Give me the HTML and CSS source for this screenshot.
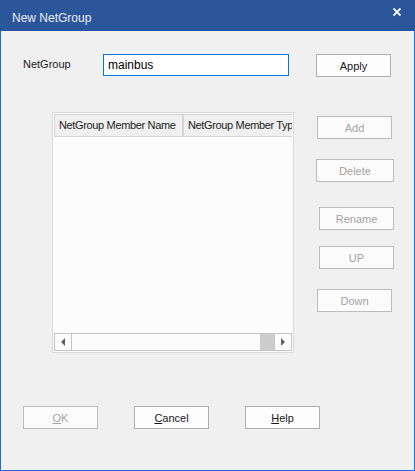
FILE: index.html
```html
<html>
    <head>
        <title>New NetGroup</title>
        <link rel="stylesheet" href="styles.css">
    </head>
    <body>
        <div class="window">
            <div class="titlebar">
                <span class="title">New NetGroup</span>
                <svg class="close" width="8" height="8" viewBox="0 0 8 8">
                    <path d="M0.5 0.5 L7.5 7.5 M7.5 0.5 L0.5 7.5" stroke="#ffffff" stroke-width="1.8" />
                </svg>
            </div>
            <div class="content">
                <div class="top-row">
                    <div class="label">NetGroup</div>
                    <input type="text" class="name-input" value="mainbus" />
                    <button class="btn apply">Apply</button>
                </div>
                <div class="middle">
                    <div class="grid">
                        <div class="grid-head">
                            <div class="col col-name">NetGroup Member Name</div>
                            <div class="col col-type">NetGroup Member Type</div>
                        </div>
                        <div class="grid-body"></div>
                        <div class="hscroll">
                            <div class="arrow left"><span class="tri tri-left"></span></div>
                            <div class="track"></div>
                            <div class="thumb"></div>
                            <div class="arrow right"><span class="tri tri-right"></span></div>
                        </div>
                    </div>
                    <div class="side">
                        <button class="btn off b-add" disabled>Add</button>
                        <button class="btn off b-delete" disabled>Delete</button>
                        <button class="btn off b-rename" disabled>Rename</button>
                        <button class="btn off b-up" disabled>UP</button>
                        <button class="btn off b-down" disabled>Down</button>
                    </div>
                </div>
                <div class="bottom-row">
                    <button class="btn off" disabled><u>O</u>K</button>
                    <button class="btn"><u>C</u>ancel</button>
                    <button class="btn"><u>H</u>elp</button>
                </div>
            </div>
        </div>
    </body>
</html>
```

FILE: styles.css
```css
body{
    margin: 0;
    font-family: "Segoe UI", "Liberation Sans", Arial, sans-serif;
    font-size: 11px;
    color: #1a1a1a;
}
.window{
    width: 415px;
    height: 471px;
    box-sizing: border-box;
    border: 1px solid #1a6fd6;
    border-top: none;
    background: #f0f0f0;
    display: flex;
    flex-direction: column;
}
.titlebar{
    height: 31px;
    margin: 0 -1px;
    background: #2b579a;
    color: #ecedf3;
    display: flex;
    align-items: center;
    justify-content: space-between;
    padding: 0 14px 0 12px;
    flex: none;
}
.title{
    font-size: 12px;
    margin-top: 4px;
}
.close{
    margin-top: -8px;
}
.content{
    padding: 23px 0 0 22px;
}
.top-row{
    display: flex;
    align-items: flex-start;
    height: 23px;
}
.label{
    width: 80px;
    line-height: 21px;
}
.name-input{
    width: 186px;
    height: 22px;
    box-sizing: border-box;
    border: 1px solid #0078d7;
    background: #ffffff;
    padding: 0 0 1px 4px;
    margin: 0 27px 0 0;
    font-family: inherit;
    font-size: 12px;
    color: #000000;
    outline: none;
}
.btn{
    width: 75px;
    height: 23px;
    box-sizing: border-box;
    border: 1px solid #adadad;
    background: #fdfdfd;
    font-family: inherit;
    font-size: 11px;
    color: #1a1a1a;
    padding: 0;
    margin: 0;
}
.btn.off{
    color: #a3a3a3;
    border-color: #bcbcbc;
    background: #fbfbfb;
}
.middle{
    display: flex;
    align-items: flex-start;
    margin-top: 35px;
    margin-left: 29px;
}
.grid{
    width: 242px;
    height: 241px;
    box-sizing: border-box;
    border: 1px solid #dadada;
    background: #fcfcfc;
    padding: 1px;
    display: flex;
    flex-direction: column;
}
.grid-head{
    display: flex;
    height: 23px;
    overflow: hidden;
    flex: none;
}
.col{
    flex: none;
    box-sizing: border-box;
    height: 23px;
    line-height: 20px;
    padding-left: 4px;
    background: #f0f0f0;
    border: 1px solid #d4d4d4;
    white-space: nowrap;
    overflow: hidden;
    letter-spacing: -0.35px;
}
.col-name{
    width: 130px;
    border-right-width: 2px;
}
.col-type{
    width: 120px;
    border-left: none;
}
.grid-body{
    flex: 1;
}
.hscroll{
    display: flex;
    height: 18px;
    box-sizing: border-box;
    border: 1px solid #c4c4c4;
    background: #fcfcfc;
    flex: none;
}
.arrow{
    width: 16px;
    display: flex;
    align-items: center;
    justify-content: center;
    flex: none;
}
.arrow.left{
    border-right: 1px solid #c4c4c4;
}
.arrow.right{
    border-left: 1px solid #c4c4c4;
}
.track{
    flex: 1;
}
.thumb{
    width: 14px;
    background: #cdcdcd;
}
.tri{
    width: 0;
    height: 0;
    border-top: 4px solid transparent;
    border-bottom: 4px solid transparent;
}
.tri-left{
    border-right: 4px solid #606060;
}
.tri-right{
    border-left: 4px solid #606060;
}
.side{
    display: flex;
    flex-direction: column;
    align-items: flex-start;
    margin-left: 22px;
    padding-top: 4px;
}
.b-add{
    margin-left: 1px;
}
.b-delete{
    width: 78px;
    margin-top: 20px;
}
.b-rename{
    margin-top: 25px;
    margin-left: 3px;
}
.b-up{
    margin-top: 16px;
    margin-left: 3px;
}
.b-down{
    margin-top: 20px;
    margin-left: 1px;
}
.bottom-row{
    display: flex;
    gap: 36px;
    margin-top: 53px;
}
```
